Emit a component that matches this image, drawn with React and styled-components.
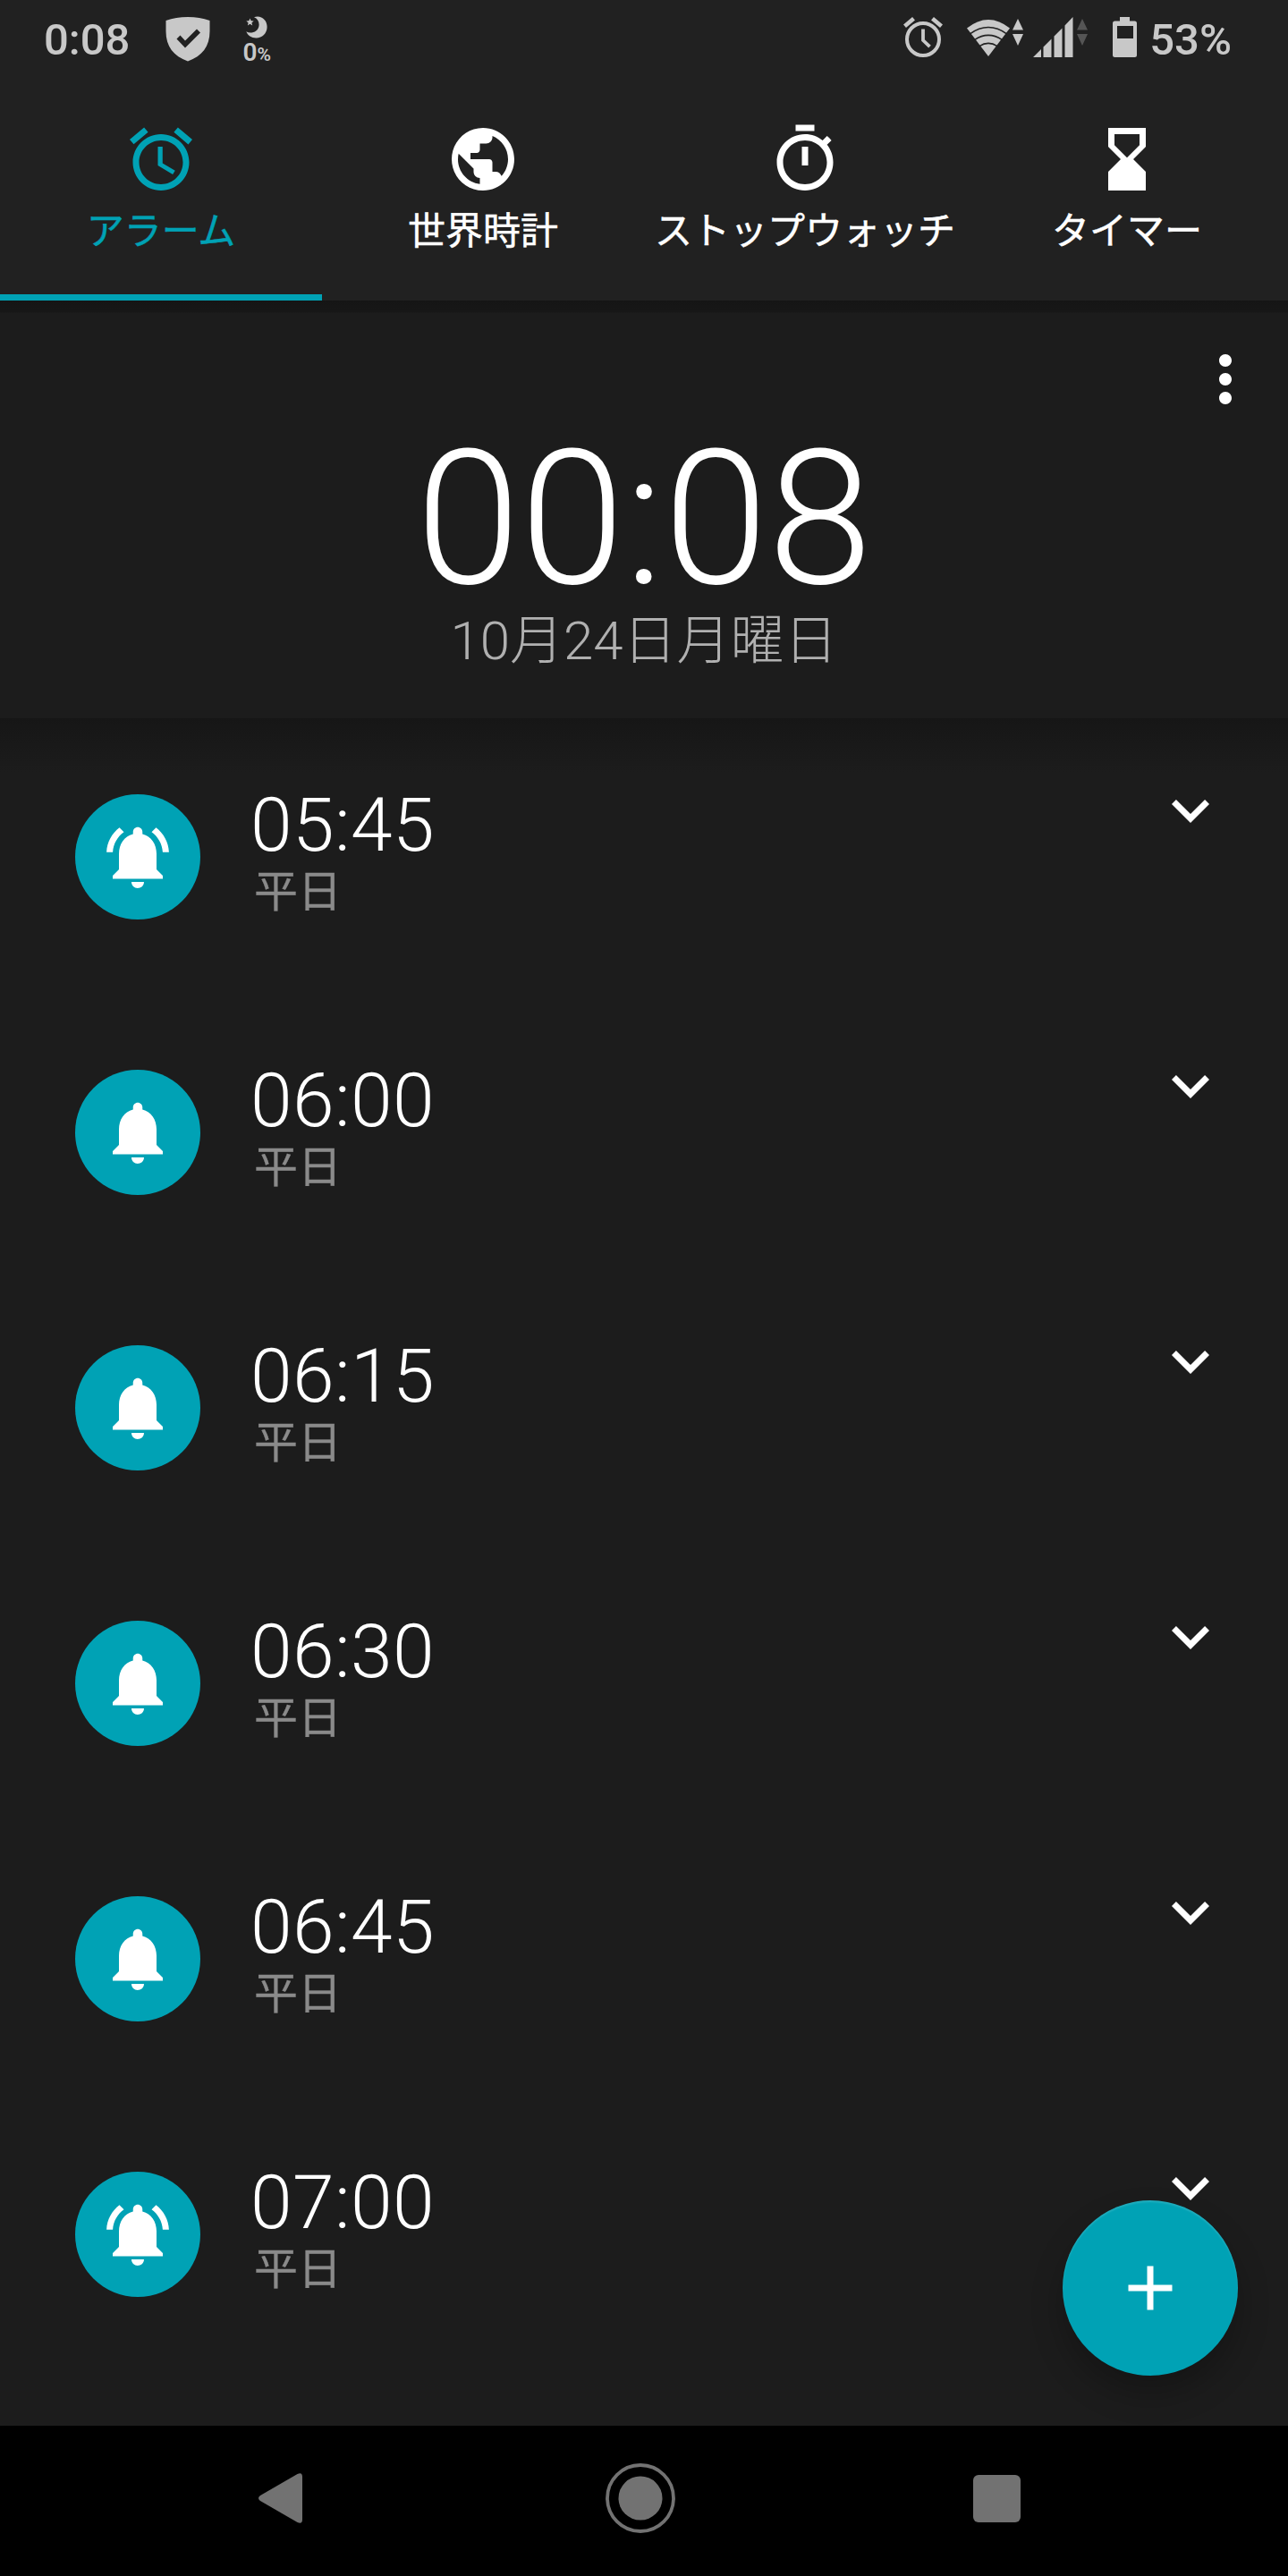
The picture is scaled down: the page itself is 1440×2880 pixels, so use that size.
import React, { useState } from 'react';
import styled, { createGlobalStyle } from 'styled-components';

const ICONS = {
  alarm:
    'M22 5.72l-4.6-3.86-1.29 1.53 4.6 3.86L22 5.72zM7.88 3.39L6.6 1.86 2 5.71l1.29 1.53 4.59-3.85zM12.5 8H11v6l4.75 2.85.75-1.23-4-2.37V8zM12 4c-4.97 0-9 4.03-9 9s4.02 9 9 9c4.97 0 9-4.03 9-9s-4.03-9-9-9zm0 16c-3.87 0-7-3.13-7-7s3.13-7 7-7 7 3.13 7 7-3.13 7-7 7z',
  globe:
    'M12 2C6.48 2 2 6.48 2 12s4.48 10 10 10 10-4.48 10-10S17.52 2 12 2zm-1 17.93c-3.95-.49-7-3.85-7-7.93 0-.62.08-1.21.21-1.79L9 15v1c0 1.1.9 2 2 2v1.93zm6.9-2.54c-.26-.81-1-1.39-1.9-1.39h-1v-3c0-.55-.45-1-1-1H8v-2h2c.55 0 1-.45 1-1V7h2c1.1 0 2-.9 2-2v-.41c2.93 1.19 5 4.06 5 7.41 0 2.08-.8 3.97-2.1 5.39z',
  stopwatch:
    'M15 1H9v2h6V1zm-4 13h2V8h-2v6zm8.03-6.61l1.42-1.42c-.43-.51-.9-.99-1.41-1.41l-1.42 1.42C16.07 4.74 14.12 4 12 4c-4.97 0-9 4.03-9 9s4.02 9 9 9 9-4.03 9-9c0-2.12-.74-4.07-1.97-5.61zM12 20c-3.87 0-7-3.13-7-7s3.13-7 7-7 7 3.13 7 7-3.13 7-7 7z',
  hourglass: 'M18 22v-6l-4-4 4-4V2H6v6l4 4-4 4v6h12zM8 7.5V4h8v3.5l-4 4-4-4z',
  more:
    'M12 8c1.1 0 2-.9 2-2s-.9-2-2-2-2 .9-2 2 .9 2 2 2zm0 2c-1.1 0-2 .9-2 2s.9 2 2 2 2-.9 2-2-.9-2-2-2zm0 6c-1.1 0-2 .9-2 2s.9 2 2 2 2-.9 2-2-.9-2-2-2z',
  bell:
    'M18 11c0-3.07-1.64-5.64-4.5-6.32V4c0-.83-.67-1.5-1.5-1.5s-1.5.67-1.5 1.5v.68C7.63 5.36 6 7.92 6 11v5l-2 2v1h16v-1l-2-2v-5zm-6 11c.14 0 .27-.01.4-.04.65-.14 1.18-.58 1.44-1.18.1-.24.15-.5.15-.78h-4c.01 1.1.9 2 2.01 2z',
  bellRing:
    'M7.58 4.08L6.15 2.65C3.75 4.48 2.17 7.3 2.03 10.5h2c.15-2.65 1.51-4.97 3.55-6.42zm12.39 6.42h2c-.15-3.2-1.73-6.02-4.12-7.85l-1.42 1.43c2.02 1.45 3.39 3.77 3.54 6.42zM18 11c0-3.07-1.64-5.64-4.5-6.32V4c0-.83-.67-1.5-1.5-1.5s-1.5.67-1.5 1.5v.68C7.63 5.36 6 7.92 6 11v5l-2 2v1h16v-1l-2-2v-5zm-6 11c.14 0 .27-.01.4-.04.65-.14 1.18-.58 1.44-1.18.1-.24.15-.5.15-.78h-4c.01 1.1.9 2 2.01 2z',
  chevron: 'M16.59 8.59L12 13.17 7.41 8.59 6 10l6 6 6-6z',
  plus: 'M19 13h-6v6h-2v-6H5v-2h6V5h2v6h6v2z',
};

const TABS = [
  { id: 'alarm', label: 'アラーム' },
  { id: 'globe', label: '世界時計' },
  { id: 'stopwatch', label: 'ストップウォッチ' },
  { id: 'hourglass', label: 'タイマー' },
];

const ALARMS = [
  { time: '05:45', days: '平日', ringing: true },
  { time: '06:00', days: '平日' },
  { time: '06:15', days: '平日' },
  { time: '06:30', days: '平日' },
  { time: '06:45', days: '平日' },
  { time: '07:00', days: '平日', ringing: true },
];

function Icon({ name }) {
  return (
    <IconSvg viewBox="0 0 24 24">
      <path d={ICONS[name]} />
    </IconSvg>
  );
}

function Shield() {
  return (
    <Glyph width="50" height="50" viewBox="0 0 50 50">
      <path
        fillRule="evenodd"
        d="M.5 4C8 1.200 16 0 25 0s17 1.200 24.500 4v12C49.500 33 41 43.500 25 49.500 9 43.500.5 33 .5 16zM12.500 24.500 22 34.500 39 17.500l-4-4L22 26.500l-5.500-6z"
      />
    </Glyph>
  );
}

function Moon() {
  return (
    <Glyph width="24" height="25" viewBox="0 0 24 25">
      <path d="M9 1.200C17-1.500 23.600 4.500 23.600 12S18 24.500 11.500 24.500C6 24.500 2 21.500.3 17.300c2 1.200 4.200 1.500 6.200 1.100C11.500 17.800 14.600 14 14.600 9.500c0-3.800-2-6.900-5.600-8.300z" />
      <path d="M4.500 2.500l1.200 2.700 3 .2-2.300 2 .8 3-2.700-1.600-2.600 1.600.7-3L.3 5.400l3-.2z" />
    </Glyph>
  );
}

function StatusAlarm() {
  return (
    <Glyph width="44" height="46" viewBox="0 0 44 46">
      <circle cx="22" cy="25" r="18" fill="none" stroke="currentColor" strokeWidth="4" />
      <path d="M1.500 10.200 11.500 1.800M42.500 10.200l-10-8.400" stroke="currentColor" strokeWidth="4.600" />
      <path d="M22 13.500V26l7.500 7.200" fill="none" stroke="currentColor" strokeWidth="3.800" />
    </Glyph>
  );
}

function Wifi() {
  return (
    <Glyph width="48" height="41" viewBox="0 0 48 41">
      <path d="M0 9.500Q24-9.500 48 9.500L24 41z" />
      <path
        d="M3.500 15.800q20.500-14.500 41 0M8.500 22.600q15.500-10.500 31 0M14 29.600q10-6.500 20 0"
        fill="none"
        stroke="#212121"
        strokeWidth="1.600"
      />
    </Glyph>
  );
}

function DataArrows() {
  return (
    <Glyph width="12" height="30" viewBox="0 0 12 30">
      <path d="M6 0l6 12.500H0zM0 17h12L6 30z" />
    </Glyph>
  );
}

function Signal() {
  return (
    <Glyph width="45" height="45" viewBox="0 0 45 45">
      <path d="M0 45 9 36v9zM11.500 33.500l9-9V45h-9zM23.500 21.500l9-9V45h-9zM35.500 9.500l9-9.500V45h-9z" />
    </Glyph>
  );
}

function Battery() {
  return (
    <Glyph width="27" height="45" viewBox="0 0 27 45">
      <path
        fillRule="evenodd"
        d="M8 0h11v4.500h5.500A2.500 2.500 0 0 1 27 7v35.500a2.500 2.500 0 0 1-2.500 2.500h-22A2.500 2.500 0 0 1 0 42.500V7a2.500 2.500 0 0 1 2.500-2.500H8zM5 10v14h18V10z"
      />
    </Glyph>
  );
}

function AlarmItem({ time, days, ringing }) {
  return (
    <AlarmRow>
      <Badge>
        <Icon name={ringing ? 'bellRing' : 'bell'} />
      </Badge>
      <AlarmInfo>
        <AlarmTime>{time}</AlarmTime>
        <AlarmDays>{days}</AlarmDays>
      </AlarmInfo>
      <ExpandButton>
        <Icon name="chevron" />
      </ExpandButton>
    </AlarmRow>
  );
}

function App() {
  const [activeTab, setActiveTab] = useState('alarm');

  return (
    <Screen>
      <GlobalStyle />
      <AppBar>
        <StatusBar>
          <StatusText>0:08</StatusText>
          <StatusSlot $left={40}>
            <Shield />
          </StatusSlot>
          <MoonSlot>
            <Moon />
            <MoonText>
              0<small>%</small>
            </MoonText>
          </MoonSlot>
          <Spacer />
          <StatusSlot>
            <StatusAlarm />
          </StatusSlot>
          <StatusSlot $left={27} $top={22}>
            <Wifi />
          </StatusSlot>
          <StatusSlot $left={3} $top={21}>
            <DataArrows />
          </StatusSlot>
          <StatusSlot $left={11}>
            <Signal />
          </StatusSlot>
          <StatusSlot $left={4} $top={21} $dim>
            <DataArrows />
          </StatusSlot>
          <StatusSlot $left={28}>
            <Battery />
          </StatusSlot>
          <BatteryText>53%</BatteryText>
        </StatusBar>
        <Tabs>
          {TABS.map(tab => (
            <Tab key={tab.id} $active={tab.id === activeTab} onClick={() => setActiveTab(tab.id)}>
              <Icon name={tab.id} />
              <TabLabel>{tab.label}</TabLabel>
            </Tab>
          ))}
        </Tabs>
      </AppBar>

      <ClockPanel>
        <Toolbar>
          <Icon name="more" />
        </Toolbar>
        <Clock>00:08</Clock>
        <DateText>10月24日月曜日</DateText>
      </ClockPanel>

      <AlarmList>
        {ALARMS.map(alarm => <AlarmItem key={alarm.time} {...alarm} />)}
      </AlarmList>

      <AddButton>
        <Icon name="plus" />
      </AddButton>

      <NavBar>
        <Glyph width="49" height="56" viewBox="0 0 49 56">
          <path d="M2 25 43.500 1Q49-1.500 49 4v48q0 5.500-5.500 3L2 31q-4-3 0-6z" />
        </Glyph>
        <Glyph width="78" height="78" viewBox="0 0 78 78">
          <circle cx="39" cy="39" r="37" fill="none" stroke="currentColor" strokeWidth="3.800" />
          <circle cx="39" cy="39" r="24.500" />
        </Glyph>
        <Glyph width="53" height="53" viewBox="0 0 53 53">
          <rect width="53" height="53" rx="6" />
        </Glyph>
      </NavBar>
    </Screen>
  );
}

const GlobalStyle = createGlobalStyle`
  body {
    margin: 0;
    background: #1c1c1c;
    font-family: Roboto, 'Noto Sans CJK JP', sans-serif;
  }
`;

const Screen = styled.div`
  position: relative;
  display: flex;
  flex-direction: column;
  width: 1440px;
  height: 2880px;
  overflow: hidden;
  background: #1c1c1c;
  color: #fff;
`;

const Glyph = styled.svg`
  display: block;
  flex: none;
  fill: currentColor;
`;

const IconSvg = styled(Glyph)`
  width: 84px;
  height: 84px;
`;

const AppBar = styled.header`
  height: 336px;
  background: #212121;
`;

const StatusBar = styled.div`
  display: flex;
  align-items: flex-start;
  box-sizing: border-box;
  height: 84px;
  padding: 0 63px 0 49px;
  color: #c8c8c8;
`;

const StatusText = styled.span`
  padding-top: 16px;
  font-size: 49px;
  font-weight: 500;
  line-height: 58px;
`;

const StatusSlot = styled.div`
  margin: ${props => props.$top ?? 19}px 0 0 ${props => props.$left ?? 0}px;
  color: ${props => (props.$dim ? '#555' : 'inherit')};
`;

const MoonSlot = styled.div`
  display: flex;
  flex-direction: column;
  align-items: center;
  margin: 18px 0 0 36px;
`;

const MoonText = styled.span`
  margin-top: 2px;
  font-size: 28px;
  font-weight: 600;
  line-height: 28px;

  small {
    font-size: 21px;
  }
`;

const Spacer = styled.div`
  flex: 1;
`;

const BatteryText = styled(StatusText)`
  margin-left: 14px;
`;

const Tabs = styled.nav`
  display: grid;
  grid-template-columns: repeat(4, 1fr);
  height: 252px;
`;

const Tab = styled.div`
  display: flex;
  flex-direction: column;
  align-items: center;
  box-sizing: border-box;
  padding-top: 52px;
  border-bottom: 7px solid ${props => (props.$active ? '#00a2b5' : 'transparent')};
  color: ${props => (props.$active ? '#00a2b5' : '#fff')};
`;

const TabLabel = styled.span`
  margin-top: 14px;
  font-size: 42px;
  line-height: 50px;
  white-space: nowrap;
  -webkit-text-stroke: 0.5px currentColor;
`;

const ClockPanel = styled.section`
  display: flex;
  flex-direction: column;
  align-items: center;
  box-sizing: border-box;
  height: 467px;
  padding-top: 46px;
  background: linear-gradient(#151515, #171717 13px, #1c1c1c 14px);
`;

const Toolbar = styled.div`
  display: flex;
  justify-content: flex-end;
  align-self: stretch;
  padding-right: 28px;
`;

const Clock = styled.div`
  margin-top: 14px;
  font-size: 210px;
  font-weight: 300;
  line-height: 200px;
`;

const DateText = styled.div`
  margin-top: 2px;
  color: #b0b0b0;
  font-size: 60px;
  font-weight: 300;
  line-height: 70px;
`;

const AlarmList = styled.main`
  height: 1909px;
  padding-top: 1px;
  box-sizing: border-box;
  background: linear-gradient(#161616, #191919 30px, #1c1c1c 60px);
`;

const AlarmRow = styled.div`
  display: flex;
  align-items: flex-start;
  box-sizing: border-box;
  height: 308px;
  padding: 0 67px 0 84px;
`;

const Badge = styled.div`
  display: flex;
  align-items: center;
  justify-content: center;
  width: 140px;
  height: 140px;
  margin-top: 84px;
  border-radius: 50%;
  background: #00a2b5;
`;

const AlarmInfo = styled.div`
  flex: 1;
  padding: 74px 0 0 56px;
`;

const AlarmTime = styled.div`
  font-size: 84px;
  font-weight: 300;
  line-height: 90px;
  letter-spacing: 0.4px;
`;

const AlarmDays = styled.div`
  margin: 1px 0 0 4px;
  color: #8a8a8a;
  font-size: 49px;
  line-height: 58px;
  -webkit-text-stroke: 0.3px currentColor;
`;

const ExpandButton = styled.div`
  margin-top: 60px;
`;

const AddButton = styled.div`
  position: absolute;
  right: 56px;
  bottom: 224px;
  display: flex;
  align-items: center;
  justify-content: center;
  width: 196px;
  height: 196px;
  border-radius: 50%;
  background: #00a2b5;
  box-shadow: 0 20px 36px rgba(0, 0, 0, 0.24), inset 0 2px 2px rgba(255, 255, 255, 0.13);
`;

const NavBar = styled.footer`
  display: grid;
  grid-template-columns: 388px 1fr 53px;
  align-items: center;
  box-sizing: border-box;
  height: 168px;
  padding: 0 299px 6px 289px;
  background: #000;
  color: #727272;
`;

export default App;
